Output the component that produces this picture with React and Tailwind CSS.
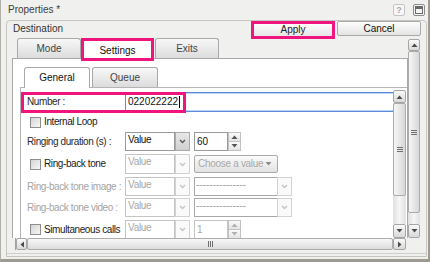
import React from "react";

const Tri = ({ dir, c = "#4a4a4a" }) => {
  if (dir === "up")
    return (
      <svg width="7" height="4" viewBox="0 0 7 4">
        <polygon points="0.5,4 3.5,0.5 6.5,4" fill={c} />
      </svg>
    );
  if (dir === "down")
    return (
      <svg width="7" height="4" viewBox="0 0 7 4">
        <polygon points="0.5,0 3.5,3.5 6.5,0" fill={c} />
      </svg>
    );
  if (dir === "left")
    return (
      <svg width="4" height="7" viewBox="0 0 4 7">
        <polygon points="4,0.5 0.5,3.5 4,6.5" fill={c} />
      </svg>
    );
  return (
    <svg width="4" height="7" viewBox="0 0 4 7">
      <polygon points="0,0.5 3.5,3.5 0,6.5" fill={c} />
    </svg>
  );
};

const Chev = ({ c }) => (
  <svg width="7" height="5" viewBox="0 0 7 5">
    <polyline points="1,1 3.5,3.5 6,1" fill="none" stroke={c} strokeWidth="1.3" />
  </svg>
);

const SBtn = ({ dir, cls }) => (
  <div
    className={
      "flex items-center justify-center border border-[#a6a6a6] rounded-[2px] bg-gradient-to-b from-[#fafafa] to-[#d9d9d9] " +
      cls
    }
  >
    <Tri dir={dir} />
  </div>
);

const VGrip = () => (
  <div className="flex flex-col gap-[1px]">
    <div className="w-[6px] h-[1px] bg-[#6f6f6f]" />
    <div className="w-[6px] h-[1px] bg-[#6f6f6f]" />
    <div className="w-[6px] h-[1px] bg-[#6f6f6f]" />
  </div>
);

const HGrip = () => (
  <div className="flex flex-row gap-[1px]">
    <div className="w-[1px] h-[6px] bg-[#6f6f6f]" />
    <div className="w-[1px] h-[6px] bg-[#6f6f6f]" />
    <div className="w-[1px] h-[6px] bg-[#6f6f6f]" />
  </div>
);

const VScroll = ({ cls, upCls, thumbCls }) => (
  <div className={"flex flex-col shrink-0 " + cls}>
    <SBtn dir="up" cls={"shrink-0 " + upCls} />
    <div className="flex-1 flex flex-col bg-gradient-to-r from-[#e0e0e0] via-[#f6f6f6] to-[#e0e0e0]">
      <div
        className={
          "shrink-0 border border-[#ababab] rounded-[2px] bg-gradient-to-r from-[#f6f6f6] to-[#d8d8d8] flex items-center justify-center " +
          thumbCls
        }
      >
        <VGrip />
      </div>
    </div>
    <SBtn dir="down" cls="h-[14px] shrink-0" />
  </div>
);

const Check = () => (
  <div className="w-[11px] h-[11px] shrink-0 border border-[#8e8e8e] bg-gradient-to-br from-[#d4d4d4] to-[#f8f8f8]" />
);

const Select = ({ disabled }) => (
  <div className="flex h-full shrink-0">
    <div
      className={
        disabled
          ? "w-[50px] h-full border border-[#c4c4c4] bg-white pl-[2px] pt-[2px] text-[#a6a6a6] tracking-[-0.3px]"
          : "w-[50px] h-full border border-[#9a9a9a] bg-white pl-[2px] pt-[2px] text-[#111] tracking-[-0.3px]"
      }
    >
      Value
    </div>
    <div
      className={
        disabled
          ? "w-[15px] h-full border border-[#d2d2d2] bg-[#fafafa] flex items-center justify-center"
          : "w-[15px] h-full border border-[#ababab] bg-gradient-to-b from-[#e8e8e8] to-[#d0d0d0] flex items-center justify-center"
      }
    >
      <Chev c={disabled ? "#c4c4c4" : "#555"} />
    </div>
  </div>
);

const Spin = ({ val, disabled }) => (
  <div className="flex h-full ml-[4px] shrink-0">
    <div
      className={
        disabled
          ? "w-[34px] h-full border border-[#c4c4c4] bg-white pl-[2px] flex items-center text-[#a6a6a6]"
          : "w-[34px] h-full border border-[#9a9a9a] bg-white pl-[2px] flex items-center text-[#111]"
      }
    >
      {val}
    </div>
    <div className="w-[13px] h-full flex flex-col">
      <div className="flex-1 border border-[#c2c2c2] bg-gradient-to-b from-[#fafafa] to-[#e4e4e4] flex items-center justify-center">
        <Tri dir="up" c={disabled ? "#b0b0b0" : "#555"} />
      </div>
      <div className="flex-1 border border-t-0 border-[#c2c2c2] bg-gradient-to-b from-[#fafafa] to-[#e4e4e4] flex items-center justify-center">
        <Tri dir="down" c={disabled ? "#b0b0b0" : "#555"} />
      </div>
    </div>
  </div>
);

const Combo = () => (
  <div className="flex h-full ml-[4px] shrink-0">
    <div className="w-[83px] h-full border border-r-0 border-[#a8a8a8] bg-white pl-[1px] pt-[2px] text-[#a0a0a0] overflow-hidden whitespace-nowrap">
      ---------------
    </div>
    <div className="w-[15px] h-full border border-[#d2d2d2] bg-[#fafafa] flex items-center justify-center">
      <Chev c={"#c4c4c4"} />
    </div>
  </div>
);

const Label = ({ children, gray }) => (
  <div
    className={
      gray
        ? "w-[104px] shrink-0 h-full pl-[6px] flex items-center text-[#a4a4a4] tracking-[-0.4px] whitespace-nowrap"
        : "w-[104px] shrink-0 h-full pl-[6px] flex items-center text-[#2a2a2a] tracking-[-0.4px] whitespace-nowrap"
    }
  >
    {children}
  </div>
);

const CheckLabel = ({ children }) => (
  <div className="w-[104px] shrink-0 h-full pl-[9px] flex items-center text-[#1a1a1a] tracking-[-0.4px] whitespace-nowrap">
    <Check />
    <span className="ml-[3px]">{children}</span>
  </div>
);

export default function App() {
  return (
    <div className="w-[430px] h-[262px] overflow-hidden flex flex-col bg-[#f0f0ee] border-l border-l-[#b0afa8] border-r-2 border-r-[#9d9b91] border-b-[3px] border-b-[#9d9b91] font-['Liberation_Sans',Arial,sans-serif] text-[10px] text-[#222] leading-none">
      {/* title bar */}
      <div className="h-[20px] shrink-0 flex items-start pl-[7px] pr-[3px] pt-[4px]">
        <span className="text-[#3c3c3c] mt-[1px]">Properties *</span>
        <div className="ml-auto flex items-start gap-[8px]">
          <div className="w-[12px] h-[12px] border border-[#c4c4c4] rounded-[2px] bg-[#f7f7f7] flex items-center justify-center text-[9px] text-[#a8a8a8] font-bold">
            ?
          </div>
          <div className="w-[12px] h-[12px] border border-[#8c8c8c] rounded-[2px] bg-[#f4f4f4] p-[1px]">
            <div className="h-full border border-[#6a6a6a] border-t-[3px]" />
          </div>
        </div>
      </div>

      {/* panel */}
      <div className="ml-[5px] w-[421px] h-[237px] shrink-0 border border-[#c6c6c0] rounded-t-[4px] flex flex-col">
        {/* header */}
        <div className="h-[17px] shrink-0 flex items-start pl-[6px] pr-[5px]">
          <span className="mt-[3px] text-[#333]">Destination</span>
          <div className="ml-auto flex items-start gap-[2px]">
            <div className="relative z-10 w-[84px] h-[18px] border-[3px] border-[#f0147f] bg-gradient-to-b from-[#fdfdfd] to-[#e6e6e6] flex items-center justify-center text-[#222]">
              Apply
            </div>
            <div className="w-[84px] h-[15px] border border-[#a9a9a9] rounded-[2px] bg-gradient-to-b from-[#fdfdfd] to-[#e4e4e4] flex items-center justify-center text-[#111]">
              Cancel
            </div>
          </div>
        </div>

        {/* body */}
        <div className="h-[200px] shrink-0 flex items-start pl-[5px]">
          <div className="w-[396px] h-[200px] flex flex-col shrink-0">
            {/* tabs */}
            <div className="h-[20px] shrink-0 flex items-start pl-[5px]">
              <div className="w-[64px] h-[20px] border border-b-0 border-[#a9a9a9] rounded-t-[3px] bg-gradient-to-b from-[#f8f8f8] to-[#dcdcdc] flex items-center justify-center text-[#444]">
                Mode
              </div>
              <div className="relative z-10 w-[73px] h-[23px] border-[3px] border-[#f0147f] bg-white flex items-start justify-center pt-[5px] text-[#111]">
                Settings
              </div>
              <div className="ml-[1px] w-[64px] h-[20px] border border-b-0 border-[#a9a9a9] rounded-t-[3px] bg-gradient-to-b from-[#f8f8f8] to-[#dcdcdc] flex items-center justify-center text-[#444]">
                Exits
              </div>
            </div>
            {/* tab content */}
            <div className="flex-1 border border-b-0 border-[#a9a9a9] bg-white pl-[7px] pt-[8px] flex flex-col overflow-hidden">
              <div className="flex-1 flex flex-col">
                {/* sub tabs */}
                <div className="h-[20px] shrink-0 flex items-start pl-[4px] gap-[2px]">
                  <div className="relative z-10 w-[66px] h-[21px] border border-b-0 border-[#a9a9a9] rounded-t-[3px] bg-white flex items-center justify-center text-[#111]">
                    General
                  </div>
                  <div className="w-[66px] h-[20px] border border-b-0 border-[#a9a9a9] rounded-t-[3px] bg-gradient-to-b from-[#f8f8f8] to-[#dcdcdc] flex items-center justify-center text-[#444]">
                    Queue
                  </div>
                </div>
                {/* sub content */}
                <div className="flex-1 flex border-t border-l border-[#b4b4b4]">
                  <div className="relative w-[372px] shrink-0 flex flex-col pt-[4px] overflow-hidden">
                    {/* Number */}
                    <div className="h-[20px] shrink-0 flex items-center">
                      <Label>Number :</Label>
                      <div className="flex-1 h-[20px] border border-r-0 border-[#5a8ad8] shadow-[inset_0_1px_0_#bcd2f2,inset_0_-1px_0_#bcd2f2] flex items-center pl-[2px] text-[#111]">
                        022022222
                        <span className="w-[1px] h-[12px] bg-black ml-[1px]" />
                      </div>
                    </div>
                    {/* Internal Loop */}
                    <div className="h-[20px] shrink-0 flex items-center">
                      <CheckLabel>Internal Loop</CheckLabel>
                    </div>
                    {/* Ringing duration */}
                    <div className="h-[19px] shrink-0 flex items-stretch">
                      <Label>Ringing duration (s) :</Label>
                      <Select />
                      <Spin val="60" />
                    </div>
                    {/* Ring-back tone */}
                    <div className="h-[20px] mt-[3px] shrink-0 flex items-stretch">
                      <CheckLabel>Ring-back tone</CheckLabel>
                      <Select disabled />
                      <div className="ml-[4px] mt-[1px] w-[84px] h-[18px] shrink-0 border border-[#ababab] rounded-[2px] bg-gradient-to-b from-[#fbfbfb] to-[#e2e2e2] flex items-center pl-[3px] pr-[5px] text-[#a8a8a8] tracking-[-0.3px] whitespace-nowrap">
                        Choose a value
                        <span className="ml-auto">
                          <Tri dir="down" c="#8a8a8a" />
                        </span>
                      </div>
                    </div>
                    {/* Ring-back tone image */}
                    <div className="h-[19px] mt-[3px] shrink-0 flex items-stretch">
                      <Label gray>Ring-back tone image :</Label>
                      <Select disabled />
                      <Combo />
                    </div>
                    {/* Ring-back tone video */}
                    <div className="h-[19px] mt-[2px] shrink-0 flex items-stretch">
                      <Label gray>Ring-back tone video :</Label>
                      <Select disabled />
                      <Combo />
                    </div>
                    {/* Simultaneous calls */}
                    <div className="h-[19px] mt-[3px] shrink-0 flex items-stretch">
                      <CheckLabel>Simultaneous calls</CheckLabel>
                      <Select disabled />
                      <Spin val="1" disabled />
                    </div>
                    {/* annotation box */}
                    <div className="absolute left-0 top-[4px] w-[165px] h-[21px] border-[3px] border-[#f0147f] pointer-events-none" />
                  </div>
                  <VScroll cls="w-[13px] h-[148px] mt-[2px]" upCls="h-[13px]" thumbCls="h-[93px]" />
                </div>
              </div>
            </div>
          </div>
          <VScroll cls="w-[12px] h-[199px] mt-[1px]" upCls="h-[12px]" thumbCls="h-[162px]" />
        </div>

        {/* horizontal scrollbar */}
        <div className="ml-[8px] w-[391px] h-[12px] shrink-0 flex border-l border-[#a0a0a0]">
          <SBtn dir="left" cls="w-[11px] h-full shrink-0" />
          <div className="w-[366px] h-full shrink-0 border border-[#acacac] rounded-[2px] bg-gradient-to-b from-[#f8f8f8] to-[#dcdcdc] flex items-center justify-center">
            <HGrip />
          </div>
          <SBtn dir="right" cls="w-[13px] h-full shrink-0" />
        </div>
        <div className="mt-[3px] flex-1 border-t border-[#cfcfcb]" />
      </div>
    </div>
  );
}
